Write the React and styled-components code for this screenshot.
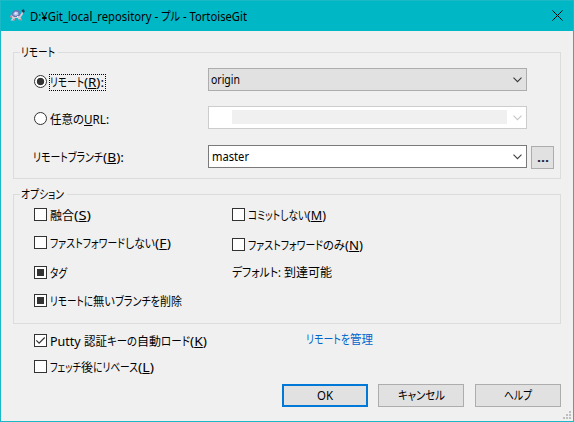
import React, { useLayoutEffect, useRef, useState } from "react";
import styled, { createGlobalStyle, css } from "styled-components";

const GlobalStyle = createGlobalStyle`
  *, *::before, *::after { box-sizing: border-box; }
  body { margin: 0; background: #f0f0f0; }
`;

const Window = styled.main`
  width: 574px;
  height: 422px;
  border: 1px solid #1bb9c6;
  background: #f0f0f0;
  color: #000;
  font: 12px/15px "Noto Sans", "Noto Sans CJK JP", sans-serif;
  display: flex;
  flex-direction: column;
  overflow: hidden;
`;

const TitleBar = styled.header`
  height: 30px;
  flex: none;
  background: #00b7c6;
  display: flex;
  align-items: center;
  padding: 0 10px 2px 8px;
`;

const TitleText = styled.h1`
  flex: 1;
  margin: 2px 0 0 5px;
  font: inherit;
  display: flex;
`;

const CloseButton = styled.button`
  border: 0;
  padding: 0;
  width: 11px;
  height: 11px;
  background: none;
  display: flex;
`;

const Body = styled.div`
  flex: 1;
  display: flex;
  flex-direction: column;
  padding: 14px 12px 0;
`;

const Group = styled.fieldset`
  flex: none;
  margin: 0 0 8px;
  padding: 0;
  min-width: 0;
  height: ${(p) => p.$height}px;
  border: 1px solid #dcdcdc;
`;

const Legend = styled.legend`
  height: 15px;
  margin-left: 6px;
  padding: 0 3px 0 1px;
  display: flex;
`;

const Field = styled.div`
  display: flex;
  height: 23px;
  margin-top: ${(p) => p.$gap}px;
`;

const FieldLabel = styled.div`
  flex: none;
  width: 194px;
  padding: ${(p) => p.$top}px 0 0 ${(p) => p.$indent}px;
`;

const Option = styled.label`
  display: flex;
  height: 13px;
  margin-top: ${(p) => p.$gap ?? 0}px;
`;

const OptionText = styled.span`
  display: flex;
  height: 17px;
  margin-left: 2px;
  padding: 0 1px;
  ${(p) =>
    p.$focused &&
    css`
      outline: 1px dotted #000;
      outline-offset: -1px;
      margin-top: -1px;
      padding: 1px 2px 0 1px;
    `}
`;

const Radio = styled.span`
  flex: none;
  width: 13px;
  height: 13px;
  border: 1px solid #333;
  border-radius: 50%;
  background: ${(p) => (p.$on ? "radial-gradient(circle, #333 3.4px, #fff 4.1px)" : "#fff")};
`;

const Box = styled.span`
  flex: none;
  width: 13px;
  height: 13px;
  border: 1px solid #333;
  background: #fff;
  display: grid;
  place-items: center;
`;

const Mixed = styled.span`
  width: 7px;
  height: 7px;
  background: #333;
`;

const combos = {
  list: css`background: #e1e1e1; border-color: #adadad; color: #000; padding-left: 2px;`,
  disabled: css`background: #fff; border-color: #ccc; color: #b5b5b5; padding-left: 23px;`,
  edit: css`background: #fff; border-color: #7a7a7a; color: #000; padding-left: 3px;`,
};

const Combo = styled.div`
  width: 319px;
  height: 23px;
  border: 1px solid;
  display: flex;
  align-items: center;
  padding-right: 4px;
  ${(p) => combos[p.$kind]}
`;

const ComboValue = styled.span`
  flex: 1;
  display: flex;
`;

const Masked = styled.span`
  width: 275px;
  height: 14px;
  margin: 0 6px 1px 0;
  background: #f0f0f0;
`;

const PushButton = styled.button`
  width: ${(p) => p.$width}px;
  height: 23px;
  margin: ${(p) => p.$margin ?? "0"};
  padding: 0;
  border: ${(p) => (p.$primary ? "2px solid #0078d7" : "1px solid #adadad")};
  background: #e1e1e1;
  color: #000;
  font: inherit;
  display: flex;
  align-items: center;
  justify-content: center;
`;

const Dots = styled.span`
  display: flex;
  font-weight: 700;
  color: #0b2447;
`;

const Columns = styled.div`
  display: grid;
  grid-template-columns: 198px 1fr;
  padding-left: 20px;
`;

const Note = styled.div`
  display: flex;
  margin-top: 14px;
  gap: 3px;
`;

const Extras = styled.div`
  display: grid;
  grid-template-columns: 272px 1fr;
  padding: 2px 0 0 21px;
`;

const Link = styled.a`
  display: flex;
  margin-top: -2px;
  color: #0066cc;
`;

const Footer = styled.footer`
  display: flex;
  justify-content: flex-end;
  gap: 11px;
  margin-top: 11px;
`;

const GripCorner = styled.div`
  display: flex;
  justify-content: flex-end;
  margin: 4px -10px 0 0;
`;

const FitBox = styled.span`
  flex: none;
  display: inline-block;
  width: ${(p) => p.$width}px;
  height: 15px;
  white-space: pre;
`;

const FitText = styled.span`
  display: inline-block;
  line-height: 15px;
  font-size: ${(p) => p.$size}px;
  font-feature-settings: "palt" 1;
  font-weight: inherit;
  transform-origin: 0 50%;
`;

const Key = styled.u`
  text-decoration-thickness: 1px;
  text-underline-offset: 1px;
  text-decoration-skip-ink: none;
`;

// A run of text condensed or widened to the advance width of the dialog font.
function Fit({ w, size = 12, children }) {
  const ref = useRef(null);
  const [scale, setScale] = useState(1);
  useLayoutEffect(() => {
    setScale(w / parseFloat(getComputedStyle(ref.current).width));
  }, [w]);
  return (
    <FitBox $width={w}>
      <FitText ref={ref} $size={size} style={{ transform: `scaleX(${scale})` }}>
        {children}
      </FitText>
    </FitBox>
  );
}

const Accel = ({ k, w, tail = "" }) => (
  <Fit w={w}>(<Key>{k}</Key>){tail}</Fit>
);

const Chevron = () => (
  <svg width="9" height="6" viewBox="0 0 9 6" fill="none" stroke="currentColor" strokeWidth="1.1" opacity=".75">
    <path d="M.5 .7 4.5 4.7 8.5 .7" />
  </svg>
);

const Check = () => (
  <svg width="11" height="11" viewBox="0 0 11 11" fill="none" stroke="#333" strokeWidth="1.2">
    <path d="M1.3 5.3 4.1 8.1 9.7 2.5" />
  </svg>
);

const Tortoise = () => (
  <svg width="16" height="16" viewBox="0 0 16 16">
    <path d="M1.5 9.5 3 7h9l1-2.5h1.5L13.5 8l-2 2.500 1.500 2.500H10L8.500 11H6l-1 2.500H1.500L3.500 11z" fill="#d5cdd6" />
    <path d="M2.500 8C3 4.500 5 3 7.500 3S11.500 5 11.500 8L9 10H5z" fill="#6576b5" />
    <path d="M4.500 6 6.500 4.500 9 5 9.500 7.500 7 9 4.500 8z" fill="#b9c6ea" />
    <path d="M1 8.500h2v2H1zM4 12h2v1.500H4zM10 12h3v1.500h-3z" fill="#b58f9b" />
    <path d="M12.500 3.500 14.500 2 16 4.500 14 6z" fill="#253b5b" />
    <path d="M6 5.500h1.500V7H6zM8 9h1.500v1H8z" fill="#f2f3fa" />
  </svg>
);

const Grip = () => (
  <svg width="8" height="8" viewBox="0 0 8 8" fill="#bfbfbf">
    <path d="M6 0h2v2H6zM3 3h2v2H3zM6 3h2v2H6zM0 6h2v2H0zM3 6h2v2H3zM6 6h2v2H6z" />
  </svg>
);

function CheckOption({ state, gap, children }) {
  return (
    <Option $gap={gap}>
      <Box>
        {state === "mixed" && <Mixed />}
        {state === "on" && <Check />}
      </Box>
      <OptionText>{children}</OptionText>
    </Option>
  );
}

export default function App() {
  return (
    <>
      <GlobalStyle />
      <Window>
        <TitleBar>
          <Tortoise />
          <TitleText>
            <Fit w={131}>{"D:¥Git_local_repository - "}</Fit>
            <Fit w={19}>プル</Fit>
            <Fit w={67}>{" - TortoiseGit"}</Fit>
          </TitleText>
          <CloseButton aria-label="閉じる">
            <svg width="11" height="11" viewBox="0 0 11 11" stroke="#000" strokeWidth="1">
              <path d="M.5 .5l10 10M10.500 .5l-10 10" />
            </svg>
          </CloseButton>
        </TitleBar>
        <Body>
          <Group $height={134}>
            <Legend><Fit w={34}>リモート</Fit></Legend>
            <Field $gap={8}>
              <FieldLabel $top={7} $indent={20}>
                <Option>
                  <Radio $on />
                  <OptionText $focused>
                    <Fit w={34}>リモート</Fit>
                    <Accel w={20} k="R" tail=":" />
                  </OptionText>
                </Option>
              </FieldLabel>
              <Combo $kind="list">
                <ComboValue><Fit w={29}>origin</Fit></ComboValue>
                <Chevron />
              </Combo>
            </Field>
            <Field $gap={15}>
              <FieldLabel $top={6} $indent={20}>
                <Option>
                  <Radio />
                  <OptionText>
                    <Fit w={34}>任意の</Fit>
                    <Fit w={25}><Key>U</Key>RL:</Fit>
                  </OptionText>
                </Option>
              </FieldLabel>
              <Combo $kind="disabled">
                <Masked />
                <Chevron />
              </Combo>
            </Field>
            <Field $gap={16}>
              <FieldLabel $top={5} $indent={19}>
                <Option as="div">
                  <Fit w={70}>リモートブランチ</Fit>
                  <Accel w={21} k="B" tail=":" />
                </Option>
              </FieldLabel>
              <Combo $kind="edit">
                <ComboValue><Fit w={37}>master</Fit></ComboValue>
                <Chevron />
              </Combo>
              <PushButton $width={23} $margin="1px 0 0 4px"><Dots><Fit w={12}>...</Fit></Dots></PushButton>
            </Field>
          </Group>
          <Group $height={137}>
            <Legend><Fit w={43}>オプション</Fit></Legend>
            <Columns>
              <div>
                <CheckOption gap={6}><Fit w={24}>融合</Fit><Accel w={17} k="S" /></CheckOption>
                <CheckOption gap={15}>
                  <Fit w={75}>ファストフォワード</Fit><Fit w={30}>しない</Fit><Accel w={16} k="F" />
                </CheckOption>
                <CheckOption gap={17} state="mixed"><Fit w={17}>タグ</Fit></CheckOption>
                <CheckOption gap={15} state="mixed">
                  <Fit w={43}>リモートに</Fit><Fit w={22}>無い</Fit><Fit w={45}>ブランチを</Fit><Fit w={22}>削除</Fit>
                </CheckOption>
              </div>
              <div>
                <CheckOption gap={6}><Fit w={59}>コミットしない</Fit><Accel w={19} k="M" /></CheckOption>
                <CheckOption gap={17}>
                  <Fit w={75}>ファストフォワード</Fit><Fit w={22}>のみ</Fit><Accel w={18} k="N" />
                </CheckOption>
                <Note><Fit w={49}>デフォルト:</Fit><Fit w={48}>到達可能</Fit></Note>
              </div>
            </Columns>
          </Group>
          <Extras>
            <div>
              <CheckOption state="on">
                <Fit w={34}>{"Putty "}</Fit><Fit w={23}>認証</Fit><Fit w={30}>キーの</Fit><Fit w={24}>自動</Fit>
                <Fit w={29}>ロード</Fit><Accel w={17} k="K" />
              </CheckOption>
              <CheckOption gap={13}>
                <Fit w={31}>フェッチ</Fit><Fit w={12}>後</Fit><Fit w={45}>にリベース</Fit><Accel w={16} k="L" />
              </CheckOption>
            </div>
            <Link><Fit w={44}>リモートを</Fit><Fit w={23}>管理</Fit></Link>
          </Extras>
          <Footer>
            <PushButton $width={86} $primary $margin="0 -1px 0 0"><Fit w={16}>OK</Fit></PushButton>
            <PushButton $width={86}><Fit w={47}>キャンセル</Fit></PushButton>
            <PushButton $width={86}><Fit w={28}>ヘルプ</Fit></PushButton>
          </Footer>
          <GripCorner><Grip /></GripCorner>
        </Body>
      </Window>
    </>
  );
}
